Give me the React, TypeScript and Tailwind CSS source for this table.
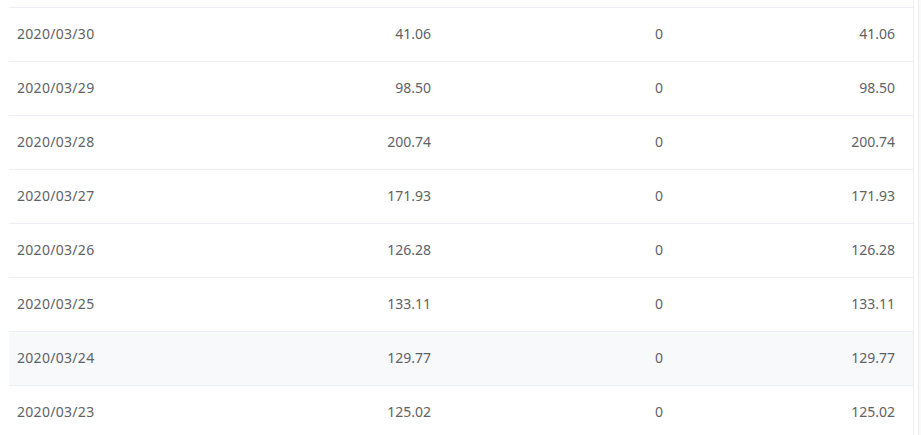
const ROWS = [
  { date: '2020/03/30', amount: '41.06', refund: '0', total: '41.06' },
  { date: '2020/03/29', amount: '98.50', refund: '0', total: '98.50' },
  { date: '2020/03/28', amount: '200.74', refund: '0', total: '200.74' },
  { date: '2020/03/27', amount: '171.93', refund: '0', total: '171.93' },
  { date: '2020/03/26', amount: '126.28', refund: '0', total: '126.28' },
  { date: '2020/03/25', amount: '133.11', refund: '0', total: '133.11' },
  { date: '2020/03/24', amount: '129.77', refund: '0', total: '129.77', hover: true },
  { date: '2020/03/23', amount: '125.02', refund: '0', total: '125.02' },
]

export default function App() {
  return (
    <div className="h-[435px] w-[921px] overflow-hidden bg-white font-['Noto_Sans',sans-serif] text-[14px] text-[#606266]">
      <div className="flex h-full">
        <div className="ml-[9px] w-[904px]">
          {/* tail of the row above, scrolled out */}
          <div className="h-[8px] border-b border-[#ebeef5]" />
          {ROWS.map((r) => (
            <div
              key={r.date}
              className={`grid h-[54px] grid-cols-[200px_232px_232px_232px] items-center border-b border-[#ebeef5] pb-[2px] ${r.hover ? 'bg-[#f8f9fb]' : ''}`}
            >
              <div className="pl-[8px] tracking-[0.3px]">{r.date}</div>
              <div className="pr-[10px] text-right">{r.amount}</div>
              <div className="pr-[10px] text-right">{r.refund}</div>
              <div className="pr-[10px] text-right">{r.total}</div>
            </div>
          ))}
        </div>
        {/* scrollbar gutter */}
        <div className="w-[5px] border-l border-[#ededed] bg-white" />
        <div className="w-[3px] border-l border-[#ededed] bg-[#fafafa]" />
      </div>
    </div>
  )
}
